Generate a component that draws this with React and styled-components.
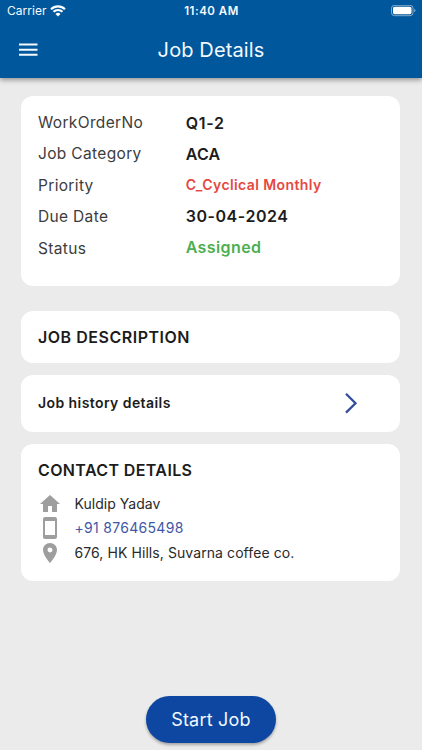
import React from "react";
import styled, { createGlobalStyle } from "styled-components";

const GlobalStyle = createGlobalStyle`
  * { box-sizing: border-box; }
  body { margin: 0; background: #ebebeb; font-family: Inter, sans-serif; color: #1c1c1c; }
`;

const Screen = styled.div`
  display: flex;
  flex-direction: column;
  width: 422px;
  height: 750px;
  background: #ebebeb;
  overflow: hidden;
`;

const Header = styled.header`
  flex: none;
  height: 77.5px;
  background: #01579b;
  color: #f4faff;
  box-shadow: 0 2px 5px rgba(0, 0, 0, 0.38);
`;

const StatusBar = styled.div`
  display: grid;
  grid-template-columns: 1fr auto 1fr;
  align-items: center;
  height: 22px;
  padding: 0 6px 0 7px;
`;

const Carrier = styled.div`
  display: flex;
  align-items: center;
  gap: 4px;
  font-size: 12px;
  line-height: 22px;
  letter-spacing: 0.02px;
`;

const Clock = styled.div`
  font-size: 11.5px;
  font-weight: 600;
  line-height: 22px;
  letter-spacing: 0.5px;
`;

const BatteryIcon = styled.svg`
  justify-self: end;
`;

const AppBar = styled.div`
  display: grid;
  grid-template-columns: 57px 1fr 57px;
  align-items: center;
  height: 55px;
`;

const MenuButton = styled.button`
  display: flex;
  justify-content: center;
  padding: 0;
  border: 0;
  background: none;
  color: inherit;
`;

const Title = styled.h1`
  margin: 0;
  text-align: center;
  font-size: 20px;
  font-weight: 400;
  line-height: 26px;
  letter-spacing: 0.12px;
`;

const Content = styled.main`
  display: flex;
  flex-direction: column;
  gap: 12px;
  padding: 18.3px 21.7px 0 21.3px;
`;

const Card = styled.section`
  height: ${(p) => p.$height}px;
  margin-bottom: ${(p) => p.$after || 0}px;
  padding: ${(p) => p.$pad || "0 16.7px"};
  border-radius: 12px;
  background: #fff;
`;

const Details = styled.div`
  display: grid;
  grid-template-columns: 147.7px 1fr;
`;

const Column = styled.div`
  display: grid;
  grid-auto-rows: ${(p) => p.$pitch}px;
  align-items: center;
  align-content: start;
  padding-top: ${(p) => p.$top}px;
`;

const Label = styled.div`
  font-size: 15.5px;
  line-height: 20px;
  letter-spacing: 0.34px;
  color: #3c3c3c;
`;

const Value = styled.div`
  font-size: ${(p) => p.$size || 16}px;
  font-weight: 600;
  line-height: 20px;
  letter-spacing: ${(p) => (p.$spacing === undefined ? 0.4 : p.$spacing)}px;
  color: ${(p) => p.$color || "#1c1c1c"};
`;

const CardRow = styled.div`
  display: flex;
  align-items: center;
  justify-content: space-between;
  height: 100%;
  padding-right: 20.2px;
`;

const Heading = styled.h2`
  margin: 0;
  font-size: 16px;
  font-weight: 600;
  line-height: 20px;
  letter-spacing: ${(p) => p.$spacing || 0.38}px;
`;

const LinkLabel = styled.span`
  padding-bottom: 1px;
  font-size: 14px;
  font-weight: 600;
  line-height: 18px;
  letter-spacing: 0.42px;
`;

const ContactList = styled.ul`
  margin: 12px 0 0;
  padding: 0;
  list-style: none;
`;

const ContactItem = styled.li`
  display: grid;
  grid-template-columns: 24px 1fr;
  column-gap: 12.5px;
  align-items: center;
  height: 24.4px;
  font-size: 14px;
  line-height: 18px;
  letter-spacing: ${(p) => p.$spacing}px;
  color: ${(p) => (p.$link ? "#3f57a6" : "#2a2a2a")};
`;

const ContactIcon = styled.svg`
  width: 24px;
  height: 24px;
  fill: #9e9e9e;
`;

const Footer = styled.footer`
  display: flex;
  justify-content: center;
  margin-top: auto;
  padding-bottom: 7px;
`;

const StartButton = styled.button`
  width: 130px;
  height: 47px;
  padding: 0;
  border: 0;
  border-radius: 24px;
  background: #0d47a1;
  color: #f0f8ff;
  font: 400 18px/24px Inter, sans-serif;
  letter-spacing: 0.22px;
  box-shadow: 0 2px 3px rgba(0, 0, 0, 0.3);
`;

const details = [
  { label: "WorkOrderNo", value: "Q1-2", spacing: 0.75 },
  { label: "Job Category", value: "ACA", spacing: 0.2 },
  { label: "Priority", value: "C_Cyclical Monthly", color: "#e5483f", size: 14 },
  { label: "Due Date", value: "30-04-2024", spacing: 0.55 },
  { label: "Status", value: "Assigned", color: "#4caf50" },
];

const contacts = [
  { text: "Kuldip Yadav", spacing: 0.03, path: "M10 20v-6h4v6h5v-8h3L12 3 2 12h3v8z" },
  {
    text: "+91 876465498",
    link: true,
    spacing: 0.3,
    path: "M17 1.01 7 1c-1.1 0-2 .9-2 2v18c0 1.1.9 2 2 2h10c1.1 0 2-.9 2-2V3c0-1.1-.9-1.99-2-1.99zM17 19H7V5h10v14z",
  },
  {
    text: "676, HK Hills, Suvarna coffee co.",
    spacing: 0.08,
    path: "M12 2C8.13 2 5 5.13 5 9c0 5.25 7 13 7 13s7-7.75 7-13c0-3.87-3.13-7-7-7zm0 9.5a2.5 2.5 0 0 1 0-5 2.5 2.5 0 0 1 0 5z",
  },
];

export default function App() {
  return (
    <Screen>
      <GlobalStyle />
      <Header>
        <StatusBar>
          <Carrier>
            Carrier
            <svg width="16" height="12" viewBox="0 0 16 12" fill="none" stroke="#fff" strokeWidth="2.1">
              <path d="M1 4.2a10 10 0 0 1 14 0M3.5 6.8a6.4 6.4 0 0 1 9 0" />
              <path d="M5.5 9a3.6 3.6 0 0 1 5 0L8 11.6z" fill="#fff" stroke="none" />
            </svg>
          </Carrier>
          <Clock>11:40 AM</Clock>
          <BatteryIcon width="25" height="12" viewBox="0 0 25 12">
            <rect x=".5" y=".3" width="21.5" height="10.4" rx="3" fill="none" stroke="#fff" strokeOpacity=".5" />
            <rect x="2" y="1.8" width="18.5" height="7.4" rx="1.6" fill="#fff" />
            <path d="M23.2 3.7q1.3.6 1.3 1.8t-1.3 1.8z" fill="#fff" fillOpacity=".5" />
          </BatteryIcon>
        </StatusBar>
        <AppBar>
          <MenuButton aria-label="Menu">
            <svg width="19" height="14" viewBox="0 0 19 14" fill="currentColor">
              <path d="M0 .6h18.5v2H0zM0 5.7h18.5v2H0zM0 10.8h18.5v2H0z" />
            </svg>
          </MenuButton>
          <Title>Job Details</Title>
        </AppBar>
      </Header>
      <Content>
        <Card $height={190.2} $after={12.6}>
          <Details>
            <Column $pitch={31.5} $top={11.2}>
              {details.map((d) => (
                <Label key={d.label}>{d.label}</Label>
              ))}
            </Column>
            <Column $pitch={31} $top={12.2}>
              {details.map((d) => (
                <Value key={d.label} $color={d.color} $size={d.size} $spacing={d.spacing}>
                  {d.value}
                </Value>
              ))}
            </Column>
          </Details>
        </Card>
        <Card $height={52}>
          <CardRow>
            <Heading $spacing={0.52}>JOB DESCRIPTION</Heading>
          </CardRow>
        </Card>
        <Card $height={57}>
          <CardRow>
            <LinkLabel>Job history details</LinkLabel>
            <svg width="24" height="24" viewBox="0 0 24 24" fill="none" stroke="#344d9c" strokeWidth="2.3">
              <path d="m7 2.8 9.5 9.4L7 21.6" />
            </svg>
          </CardRow>
        </Card>
        <Card $height={137.3} $pad="16.2px 16.7px">
          <Heading>CONTACT DETAILS</Heading>
          <ContactList>
            {contacts.map((c) => (
              <ContactItem key={c.text} $link={c.link} $spacing={c.spacing}>
                <ContactIcon viewBox="0 0 24 24">
                  <path d={c.path} />
                </ContactIcon>
                <span>{c.text}</span>
              </ContactItem>
            ))}
          </ContactList>
        </Card>
      </Content>
      <Footer>
        <StartButton>Start Job</StartButton>
      </Footer>
    </Screen>
  );
}
